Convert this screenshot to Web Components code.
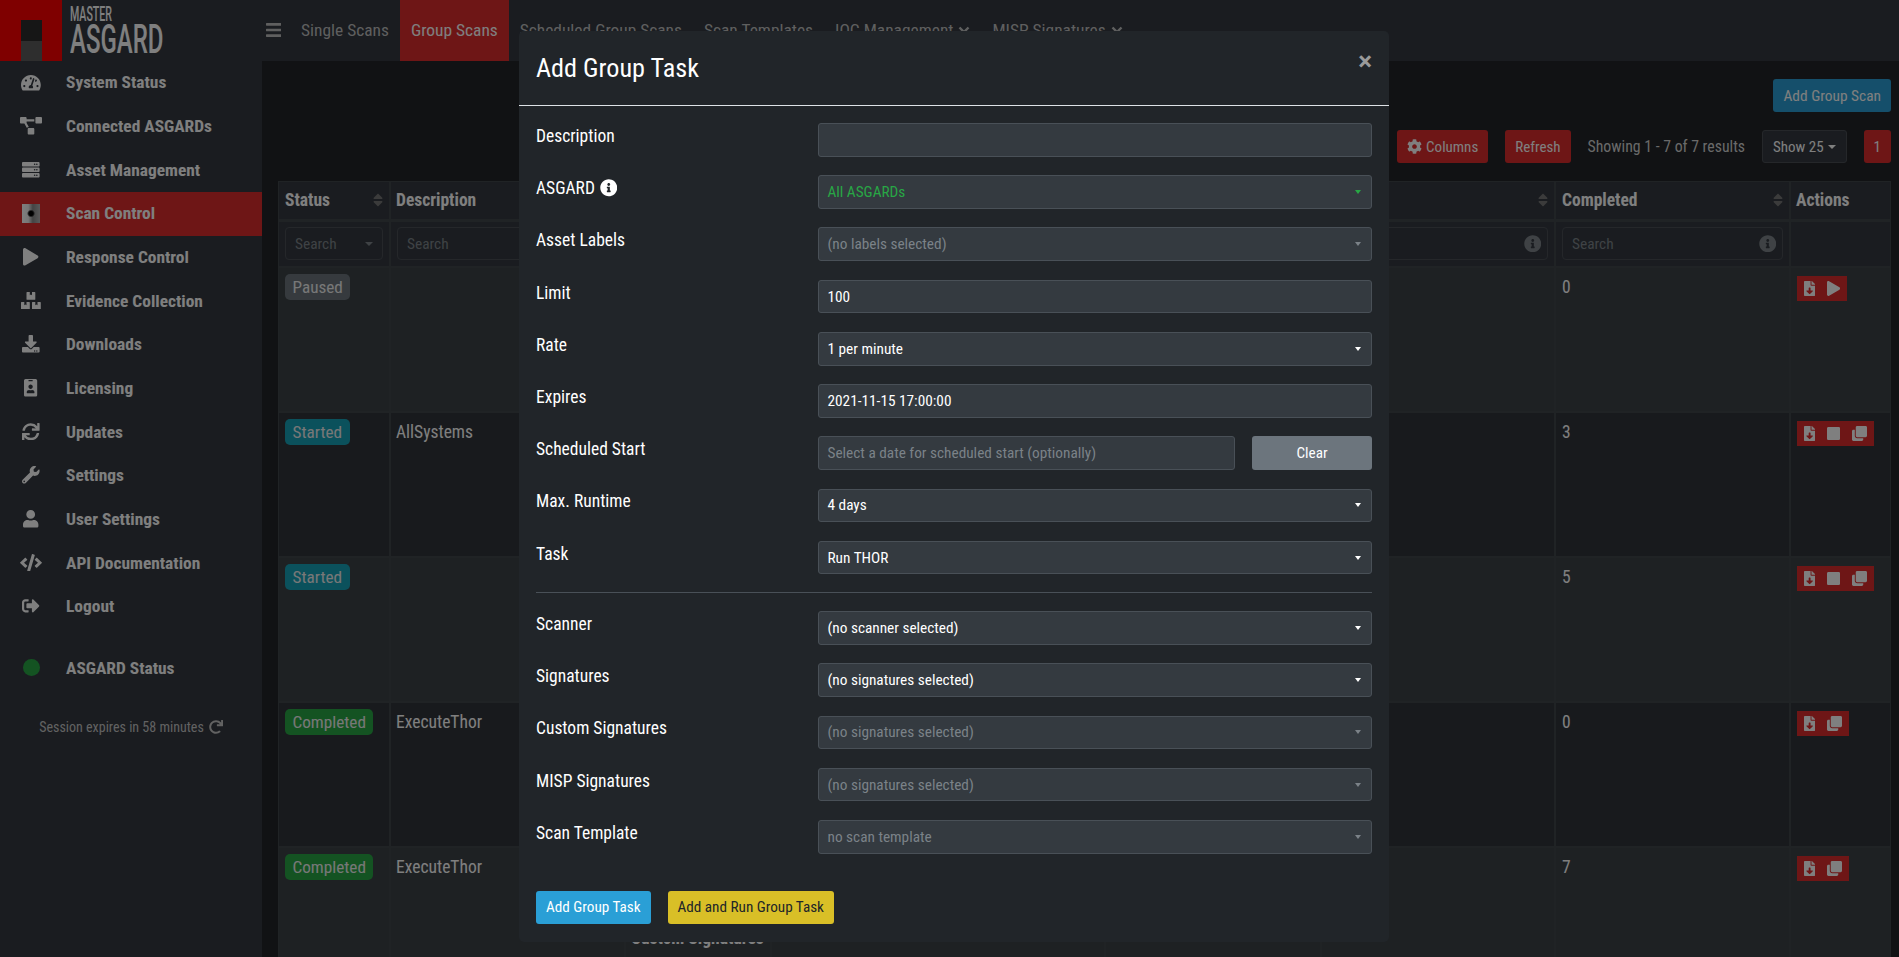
<!DOCTYPE html>
<html>
<head>
<meta charset="utf-8">
<title>ASGARD</title>
<style>
  html, body { margin: 0; height: 957px; overflow: hidden; }
  body {
    background: #222428;
    color: #fff;
    font-family: "Roboto Condensed", "Liberation Sans Narrow", Roboto, sans-serif;
    font-stretch: condensed;
    font-size: 17.5px;
  }
</style>
</head>
<body>
<asgard-page>
  <side-bar slot="side">
    <side-item icon="gauge">System Status</side-item>
    <side-item icon="diagram">Connected ASGARDs</side-item>
    <side-item icon="server">Asset Management</side-item>
    <side-item icon="scan" active>Scan Control</side-item>
    <side-item icon="play">Response Control</side-item>
    <side-item icon="boxes">Evidence Collection</side-item>
    <side-item icon="download">Downloads</side-item>
    <side-item icon="badge">Licensing</side-item>
    <side-item icon="sync">Updates</side-item>
    <side-item icon="wrench">Settings</side-item>
    <side-item icon="user">User Settings</side-item>
    <side-item icon="code">API Documentation</side-item>
    <side-item icon="logout">Logout</side-item>
  </side-bar>
  <top-nav slot="nav"></top-nav>
  <scan-view slot="main"></scan-view>
</asgard-page>

<modal-dialog heading="Add Group Task">
  <form-row label="Description"><form-control></form-control></form-row>
  <form-row label="ASGARD" info><form-control caret tone="green" value="All ASGARDs"></form-control></form-row>
  <form-row label="Asset Labels"><form-control caret tone="muted" value="(no labels selected)"></form-control></form-row>
  <form-row label="Limit"><form-control value="100"></form-control></form-row>
  <form-row label="Rate"><form-control caret value="1 per minute"></form-control></form-row>
  <form-row label="Expires"><form-control value="2021-11-15 17:00:00"></form-control></form-row>
  <form-row label="Scheduled Start">
    <form-control tone="muted" value="Select a date for scheduled start (optionally)"></form-control>
    <ui-button slot="extra" tone="gray">Clear</ui-button>
  </form-row>
  <form-row label="Max. Runtime"><form-control caret value="4 days"></form-control></form-row>
  <form-row label="Task"><form-control caret value="Run THOR"></form-control></form-row>
  <form-rule></form-rule>
  <form-row label="Scanner"><form-control caret value="(no scanner selected)"></form-control></form-row>
  <form-row label="Signatures"><form-control caret value="(no signatures selected)"></form-control></form-row>
  <form-row label="Custom Signatures"><form-control caret tone="muted" value="(no signatures selected)"></form-control></form-row>
  <form-row label="MISP Signatures"><form-control caret tone="muted" value="(no signatures selected)"></form-control></form-row>
  <form-row label="Scan Template"><form-control caret tone="muted" value="no scan template"></form-control></form-row>
  <ui-button slot="footer" tone="blue">Add Group Task</ui-button>
  <ui-button slot="footer" tone="yellow">Add and Run Group Task</ui-button>
</modal-dialog>

<script>
const ICONS = {
  gauge: [576, 'M288 32C128.94 32 0 160.94 0 320c0 52.8 14.25 102.26 39.06 144.8 5.61 9.62 16.3 15.2 27.44 15.2h443c11.14 0 21.83-5.58 27.44-15.2C561.75 422.26 576 372.8 576 320c0-159.06-128.94-288-288-288zm0 64c14.71 0 26.58 10.13 30.32 23.65-1.11 2.26-2.64 4.23-3.45 6.67l-9.22 27.67c-5.13 3.49-10.97 6.01-17.64 6.01-17.67 0-32-14.33-32-32S270.33 96 288 96zM96 384c-17.67 0-32-14.33-32-32s14.33-32 32-32 32 14.33 32 32-14.33 32-32 32zm48-160c-17.67 0-32-14.33-32-32s14.33-32 32-32 32 14.33 32 32-14.33 32-32 32zm246.77-72.41l-61.33 184C343.13 347.33 352 364.54 352 384c0 11.72-3.38 22.55-8.88 32H232.88c-5.5-9.45-8.88-20.28-8.88-32 0-33.94 26.5-61.43 59.9-63.59l61.34-184.01c4.17-12.56 17.73-19.45 30.36-15.17 12.57 4.19 19.35 17.79 15.17 30.36zm14.66 57.2l15.52-46.55c3.47-1.29 7.13-2.23 11.05-2.23 17.67 0 32 14.33 32 32s-14.33 32-32 32c-11.38-.01-20.89-6.28-26.57-15.22zM480 384c-17.67 0-32-14.33-32-32s14.33-32 32-32 32 14.33 32 32-14.33 32-32 32z'],
  diagram: [640, 'M384 320H256c-17.67 0-32 14.33-32 32v128c0 17.67 14.33 32 32 32h128c17.67 0 32-14.33 32-32V352c0-17.67-14.33-32-32-32zM192 32c0-17.67-14.33-32-32-32H32C14.33 0 0 14.33 0 32v128c0 17.67 14.33 32 32 32h95.72l73.16 128.04C211.98 300.98 232.4 288 256 288h.28L192 175.51V128h224V64H192V32zM608 0H480c-17.67 0-32 14.33-32 32v128c0 17.67 14.33 32 32 32h128c17.67 0 32-14.33 32-32V32c0-17.67-14.33-32-32-32z'],
  server: [512, 'M480 160H32c-17.673 0-32-14.327-32-32V64c0-17.673 14.327-32 32-32h448c17.673 0 32 14.327 32 32v64c0 17.673-14.327 32-32 32zm-48-88c-13.255 0-24 10.745-24 24s10.745 24 24 24 24-10.745 24-24-10.745-24-24-24zm-64 0c-13.255 0-24 10.745-24 24s10.745 24 24 24 24-10.745 24-24-10.745-24-24-24zm112 248H32c-17.673 0-32-14.327-32-32v-64c0-17.673 14.327-32 32-32h448c17.673 0 32 14.327 32 32v64c0 17.673-14.327 32-32 32zm-48-88c-13.255 0-24 10.745-24 24s10.745 24 24 24 24-10.745 24-24-10.745-24-24-24zm-64 0c-13.255 0-24 10.745-24 24s10.745 24 24 24 24-10.745 24-24-10.745-24-24-24zm112 248H32c-17.673 0-32-14.327-32-32v-64c0-17.673 14.327-32 32-32h448c17.673 0 32 14.327 32 32v64c0 17.673-14.327 32-32 32zm-48-88c-13.255 0-24 10.745-24 24s10.745 24 24 24 24-10.745 24-24-10.745-24-24-24zm-64 0c-13.255 0-24 10.745-24 24s10.745 24 24 24 24-10.745 24-24-10.745-24-24-24z'],
  play: [448, 'M424.4 214.7L72.4 6.6C43.8-10.3 0 6.1 0 47.9V464c0 37.5 40.7 60.1 72.4 41.3l352-208c31.4-18.5 31.5-64.1 0-82.6z'],
  boxes: [576, 'M560 288h-80v96l-32-21.3-32 21.3v-96h-80c-8.8 0-16 7.2-16 16v192c0 8.8 7.2 16 16 16h224c8.8 0 16-7.2 16-16V304c0-8.8-7.2-16-16-16zm-384-64h224c8.8 0 16-7.2 16-16V16c0-8.8-7.2-16-16-16h-80v96l-32-21.3L256 96V0h-80c-8.8 0-16 7.2-16 16v192c0 8.8 7.2 16 16 16zm64 64h-80v96l-32-21.3L96 384v-96H16c-8.8 0-16 7.2-16 16v192c0 8.8 7.2 16 16 16h224c8.8 0 16-7.2 16-16V304c0-8.8-7.2-16-16-16z'],
  download: [512, 'M216 0h80c13.3 0 24 10.7 24 24v168h87.7c17.8 0 26.7 21.5 14.1 34.1L269.7 378.3c-7.5 7.5-19.8 7.5-27.3 0L90.1 226.1c-12.6-12.6-3.7-34.1 14.1-34.1H192V24c0-13.3 10.7-24 24-24zm296 376v112c0 13.3-10.7 24-24 24H24c-13.3 0-24-10.7-24-24V376c0-13.3 10.7-24 24-24h146.7l49 49c20.1 20.1 52.5 20.1 72.6 0l49-49H488c13.3 0 24 10.7 24 24zm-124 88c0-11-9-20-20-20s-20 9-20 20 9 20 20 20 20-9 20-20zm64 0c0-11-9-20-20-20s-20 9-20 20 9 20 20 20 20-9 20-20z'],
  badge: [384, 'M336 0H48C21.5 0 0 21.5 0 48v416c0 26.5 21.5 48 48 48h288c26.5 0 48-21.5 48-48V48c0-26.5-21.5-48-48-48zM144 32h96c8.8 0 16 7.2 16 16s-7.2 16-16 16h-96c-8.8 0-16-7.2-16-16s7.2-16 16-16zm48 128c35.3 0 64 28.7 64 64s-28.7 64-64 64-64-28.7-64-64 28.7-64 64-64zm112 236.8c0 10.6-10 19.2-22.4 19.2H102.4C90 416 80 407.4 80 396.8v-19.2c0-31.8 30.1-57.6 67.2-57.6h5c12.3 5.1 25.7 8 39.8 8s27.6-2.9 39.8-8h5c37.1 0 67.2 25.8 67.2 57.6v19.2z'],
  sync: [512, 'M440.65 12.57l4 82.77A247.16 247.16 0 0 0 255.83 8C134.73 8 33.91 94.92 12.29 209.82A12 12 0 0 0 24.09 224h49.05a12 12 0 0 0 11.67-9.26 175.91 175.91 0 0 1 317-56.94l-101.46-4.86a12 12 0 0 0-12.57 12v47.41a12 12 0 0 0 12 12H500a12 12 0 0 0 12-12V12a12 12 0 0 0-12-12h-47.37a12 12 0 0 0-11.98 12.57zM255.83 432a175.61 175.61 0 0 1-146-77.8l101.8 4.87a12 12 0 0 0 12.57-12v-47.4a12 12 0 0 0-12-12H12a12 12 0 0 0-12 12V500a12 12 0 0 0 12 12h47.35a12 12 0 0 0 12-12.6l-4.15-82.57A247.17 247.17 0 0 0 255.83 504c121.11 0 221.93-86.92 243.55-201.82a12 12 0 0 0-11.8-14.18h-49.05a12 12 0 0 0-11.67 9.26A175.86 175.86 0 0 1 255.83 432z'],
  wrench: [512, 'M507.73 109.1c-2.24-9.03-13.54-12.09-20.12-5.51l-74.36 74.36-67.88-11.31-11.31-67.88 74.36-74.36c6.62-6.62 3.43-17.9-5.66-20.16-47.38-11.74-99.55.91-136.58 37.93-39.64 39.64-50.55 97.1-34.05 147.2L18.74 402.76c-24.99 24.99-24.99 65.51 0 90.5 24.99 24.99 65.51 24.99 90.5 0l213.21-213.21c50.12 16.71 107.47 5.68 147.37-34.22 37.07-37.07 49.7-89.32 37.91-136.73zM64 472c-13.25 0-24-10.75-24-24 0-13.26 10.75-24 24-24s24 10.74 24 24c0 13.25-10.75 24-24 24z'],
  user: [448, 'M224 256c70.7 0 128-57.3 128-128S294.7 0 224 0 96 57.3 96 128s57.3 128 128 128zm89.6 32h-16.7c-22.2 10.2-46.9 16-72.9 16s-50.6-5.8-72.9-16h-16.7C60.2 288 0 348.2 0 422.4V464c0 26.5 21.5 48 48 48h352c26.5 0 48-21.5 48-48v-41.6c0-74.2-60.2-134.4-134.4-134.4z'],
  code: [640, 'M278.9 511.5l-61-17.7c-6.4-1.8-10-8.5-8.2-14.9L346.2 8.7c1.8-6.4 8.5-10 14.9-8.2l61 17.7c6.4 1.8 10 8.5 8.2 14.9L293.8 503.3c-1.9 6.4-8.5 10.1-14.9 8.2zm-114-112.2l43.5-46.4c4.6-4.9 4.3-12.7-.8-17.2L117 256l90.6-79.7c5.1-4.5 5.5-12.3.8-17.2l-43.5-46.4c-4.5-4.8-12.1-5.1-17-.5L3.8 247.2c-5.1 4.7-5.1 12.8 0 17.5l144.1 135.1c4.9 4.6 12.5 4.4 17-.5zm327.2.6l144.1-135.1c5.1-4.7 5.1-12.8 0-17.5L492.1 112.1c-4.8-4.5-12.4-4.3-17 .5L431.6 159c-4.6 4.9-4.3 12.7.8 17.2L523 256l-90.6 79.7c-5.1 4.5-5.5 12.3-.8 17.2l43.5 46.4c4.5 4.9 12.1 5.1 17 .6z'],
  logout: [512, 'M497 273L329 441c-15 15-41 4.5-41-17v-96H152c-13.3 0-24-10.7-24-24v-96c0-13.3 10.7-24 24-24h136V88c0-21.4 25.9-32 41-17l168 168c9.3 9.4 9.3 24.6 0 34zM192 436v-40c0-6.6-5.4-12-12-12H96c-17.7 0-32-14.3-32-32V160c0-17.7 14.3-32 32-32h84c6.6 0 12-5.4 12-12V76c0-6.6-5.4-12-12-12H96c-53 0-96 43-96 96v192c0 53 43 96 96 96h84c6.6 0 12-5.4 12-12z'],
  redo: [512, 'M500.33 0h-47.41a12 12 0 0 0-12 12.57l4 82.76A247.42 247.42 0 0 0 256 8C119.34 8 7.9 119.53 8 256.19 8.1 393.07 119.1 504 256 504a247.1 247.1 0 0 0 166.18-63.91 12 12 0 0 0 .48-17.43l-34-34a12 12 0 0 0-16.38-.55A176 176 0 1 1 402.1 157.8l-101.53-4.87a12 12 0 0 0-12.57 12v47.41a12 12 0 0 0 12 12h200.33a12 12 0 0 0 12-12V12a12 12 0 0 0-12-12z'],
  bars: [448, 'M16 132h416c8.837 0 16-7.163 16-16V76c0-8.837-7.163-16-16-16H16C7.163 60 0 67.163 0 76v40c0 8.837 7.163 16 16 16zm0 160h416c8.837 0 16-7.163 16-16v-40c0-8.837-7.163-16-16-16H16c-8.837 0-16 7.163-16 16v40c0 8.837 7.163 16 16 16zm0 160h416c8.837 0 16-7.163 16-16v-40c0-8.837-7.163-16-16-16H16c-8.837 0-16 7.163-16 16v40c0 8.837 7.163 16 16 16z'],
  cog: [512, 'M487.4 315.7l-42.6-24.6c4.3-23.2 4.3-47 0-70.2l42.6-24.6c4.9-2.8 7.1-8.6 5.5-14-11.1-35.6-30-67.8-54.7-94.6-3.8-4.1-10-5.1-14.8-2.3L380.8 110c-17.9-15.4-38.5-27.3-60.8-35.1V25.8c0-5.6-3.9-10.5-9.4-11.7-36.7-8.2-74.3-7.8-109.2 0-5.5 1.2-9.4 6.1-9.4 11.7V75c-22.2 7.9-42.8 19.8-60.8 35.1L88.7 85.5c-4.9-2.8-11-1.9-14.8 2.3-24.7 26.7-43.6 58.9-54.7 94.6-1.7 5.4.6 11.2 5.5 14L67.3 221c-4.3 23.2-4.3 47 0 70.2l-42.6 24.6c-4.9 2.8-7.1 8.6-5.5 14 11.1 35.6 30 67.8 54.7 94.6 3.8 4.1 10 5.1 14.8 2.3l42.6-24.6c17.9 15.4 38.5 27.3 60.8 35.1v49.2c0 5.6 3.9 10.5 9.4 11.7 36.7 8.2 74.3 7.8 109.2 0 5.5-1.2 9.4-6.1 9.4-11.7v-49.2c22.2-7.9 42.8-19.8 60.8-35.1l42.6 24.6c4.9 2.8 11 1.9 14.8-2.3 24.7-26.7 43.6-58.9 54.7-94.6 1.5-5.5-.7-11.3-5.6-14.1zM256 336c-44.1 0-80-35.9-80-80s35.9-80 80-80 80 35.9 80 80-35.9 80-80 80z'],
  info: [512, 'M256 8C119.043 8 8 119.083 8 256c0 136.997 111.043 248 248 248s248-111.003 248-248C504 119.083 392.957 8 256 8zm0 110c23.196 0 42 18.804 42 42s-18.804 42-42 42-42-18.804-42-42 18.804-42 42-42zm56 254c0 6.627-5.373 12-12 12h-88c-6.627 0-12-5.373-12-12v-24c0-6.627 5.373-12 12-12h12v-64h-12c-6.627 0-12-5.373-12-12v-24c0-6.627 5.373-12 12-12h64c6.627 0 12 5.373 12 12v100h12c6.627 0 12 5.373 12 12v24z'],
  file: [384, 'M224 136V0H24C10.7 0 0 10.7 0 24v464c0 13.3 10.7 24 24 24h336c13.3 0 24-10.7 24-24V160H248c-13.2 0-24-10.8-24-24zm76.45 211.36l-96.42 95.7c-6.65 6.61-17.39 6.61-24.04 0l-96.42-95.7C73.42 337.29 80.54 320 94.82 320H160v-80c0-8.84 7.16-16 16-16h32c8.84 0 16 7.16 16 16v80h65.18c14.28 0 21.4 17.29 11.27 27.36zM377 105L279.1 7c-4.5-4.5-10.6-7-17-7H256v128h128v-6.1c0-6.3-2.5-12.4-7-16.9z'],
  stop: [448, 'M400 32H48C21.5 32 0 53.5 0 80v352c0 26.5 21.5 48 48 48h352c26.5 0 48-21.5 48-48V80c0-26.5-21.5-48-48-48z'],
  clone: [512, 'M464 0c26.51 0 48 21.49 48 48v288c0 26.51-21.49 48-48 48H176c-26.51 0-48-21.49-48-48V48c0-26.51 21.49-48 48-48h288M176 416c-44.112 0-80-35.888-80-80V128H48c-26.51 0-48 21.49-48 48v288c0 26.51 21.49 48 48 48h288c26.51 0 48-21.49 48-48v-48H176z'],
  sort: [320, 'M41 288h238c21.4 0 32.1 25.9 17 41L177 448c-9.4 9.4-24.6 9.4-33.9 0L24 329c-15.1-15.1-4.4-41 17-41zm255-105L177 64c-9.4-9.4-24.6-9.4-33.9 0L24 183c-15.1 15.1-4.4 41 17 41h238c21.4 0 32.1-25.9 17-41z']
};

class UiIcon extends HTMLElement {
  connectedCallback() {
    const size = parseFloat(this.getAttribute('size') || 17.6);
    const name = this.getAttribute('name');
    const root = this.attachShadow({mode: 'open'});
    const style = '<style>:host{display:inline-flex;line-height:0}svg{display:block;fill:currentColor}</style>';
    if (name === 'scan') {
      root.innerHTML = style + `<svg width="18" height="19" viewBox="0 0 18 19">
        <defs>
          <linearGradient id="g"><stop offset="0" stop-color="#fff"/><stop offset=".35" stop-color="#eee"/><stop offset=".6" stop-color="#888"/><stop offset="1" stop-color="#b4b4b4"/></linearGradient>
          <radialGradient id="h"><stop offset=".55" stop-color="#000"/><stop offset="1" stop-color="#000" stop-opacity="0"/></radialGradient>
        </defs>
        <rect width="18" height="19" fill="url(#g)"/><rect x="5" y="5.5" width="8" height="8" fill="url(#h)"/></svg>`;
      return;
    }
    const [w, d] = ICONS[name];
    root.innerHTML = style + `<svg width="${size * w / 512}" height="${size}" viewBox="0 0 ${w} 512"><path d="${d}"/></svg>`;
  }
}
customElements.define('ui-icon', UiIcon);

class AsgardPage extends HTMLElement {
  constructor() {
    super();
    this.attachShadow({mode: 'open'}).innerHTML = `
      <style>
        :host { display: grid; grid-template-columns: 262px 1fr; grid-template-rows: 61px 896px; width: 1899px; height: 957px; overflow: hidden; }
        .logo { background: #343941; display: flex; }
        .mark { width: 62px; height: 61px; background: #f00; flex: none; display: flex; flex-direction: column; align-items: center; padding-top: 20px; box-sizing: border-box; }
        .mark i { display: block; width: 21px; height: 20.5px; background: #2c2c2c; }
        .mark i + i { background: #5c5c5c; }
        .word { margin-left: 8px; padding-top: 7px; color: #fff; font-family: Roboto, sans-serif; font-stretch: normal; }
        .word b { display: block; font-weight: 500; white-space: nowrap; transform-origin: 0 0; }
        .small { font-size: 20px; line-height: 14px; transform: scaleX(.53); }
        .big { font-size: 41px; line-height: 30px; margin-top: 3px; transform: scaleX(.585); }
        .side { background: #343941; }
      </style>
      <div class="logo">
        <div class="mark"><i></i><i></i></div>
        <div class="word"><b class="small">MASTER</b><b class="big">ASGARD</b></div>
      </div>
      <slot name="nav"></slot>
      <div class="side"><slot name="side"></slot></div>
      <slot name="main"></slot>`;
  }
}
customElements.define('asgard-page', AsgardPage);

class SideBar extends HTMLElement {
  constructor() {
    super();
    this.attachShadow({mode: 'open'}).innerHTML = `
      <style>
        :host { display: block; }
        .status { display: flex; align-items: center; height: 44px; margin-top: 17px; font-size: 17.4px; font-weight: 700; color: #fff; }
        .dot { width: 17px; height: 17px; border-radius: 50%; background: #28a745; margin: 0 26px 0 23px; flex: none; }
        .session { display: flex; align-items: center; justify-content: center; gap: 5px; margin-top: 22px; height: 30px; font-size: 14px; color: #c4c4c4; }
      </style>
      <slot></slot>
      <div class="status"><span class="dot"></span>ASGARD Status</div>
      <div class="session">Session expires in 58 minutes <ui-icon name="redo" size="14"></ui-icon></div>`;
  }
}
customElements.define('side-bar', SideBar);

class SideItem extends HTMLElement {
  connectedCallback() {
    this.attachShadow({mode: 'open'}).innerHTML = `
      <style>
        :host { display: flex; align-items: center; height: 43.67px; box-sizing: border-box; padding-bottom: 1px; font-size: 17.4px; font-weight: 700; color: #fff; }
        :host([active]) { background: #dc2c2c; }
        .ico { width: 62px; display: flex; justify-content: center; margin-right: 4px; }
      </style>
      <span class="ico"><ui-icon name="${this.getAttribute('icon')}"></ui-icon></span><slot></slot>`;
  }
}
customElements.define('side-item', SideItem);

class TopNav extends HTMLElement {
  constructor() {
    super();
    const link = (text, on, drop) => `<a class="${on ? 'on' : ''}">${text}${drop ? '<svg width="12" height="8" viewBox="0 0 12 8"><path d="M1.5 1.5 6 6l4.5-4.5" fill="none" stroke="currentColor" stroke-width="2.4"/></svg>' : ''}</a>`;
    this.attachShadow({mode: 'open'}).innerHTML = `
      <style>
        :host { display: flex; align-items: stretch; height: 61px; box-sizing: border-box; background: #343941; color: #bfbfbf; font-size: 17.4px; }
        .bars { width: 23px; margin-right: 5px; padding-bottom: 2px; display: flex; align-items: center; justify-content: center; }
        a { display: flex; align-items: center; gap: 5px; padding: 0 11px 2px; white-space: nowrap; }
        a.on { background: #dc2c2c; color: #fff; }
      </style>
      <span class="bars"><ui-icon name="bars" size="18"></ui-icon></span>
      ${link('Single Scans')}${link('Group Scans', true)}${link('Scheduled Group Scans')}${link('Scan Templates')}${link('IOC Management', false, true)}${link('MISP Signatures', false, true)}`;
  }
}
customElements.define('top-nav', TopNav);

class UiButton extends HTMLElement {
  constructor() {
    super();
    this.attachShadow({mode: 'open'}).innerHTML = `
      <style>
        :host { display: inline-flex; align-items: center; justify-content: center; gap: 4px; height: 33px; padding: 0 10px; box-sizing: border-box; border-radius: 3px; font-size: var(--btn-size, 15.2px); white-space: nowrap; color: #fff; background: #dc2c2c; }
        :host([tone=gray]) { background: #6c757d; width: 120px; }
        :host([tone=blue]) { background: #2a9fd6; }
        :host([tone=yellow]) { background: #d9bf27; color: #212529; }
        :host([tone=outline]) { background: #343941; border: 1px solid #4a4f55; }
      </style><slot></slot>`;
  }
}
customElements.define('ui-button', UiButton);

class StatusBadge extends HTMLElement {
  constructor() {
    super();
    this.attachShadow({mode: 'open'}).innerHTML = `
      <style>
        :host { display: inline-block; vertical-align: top; height: 26px; line-height: 26px; padding: 0 7.5px; border-radius: 5px; font-size: 17.2px; background: #6c757d; color: #f0f0f0; }
        :host([tone=started]) { background: #17a2b8; }
        :host([tone=completed]) { background: #28a745; }
      </style><slot></slot>`;
  }
}
customElements.define('status-badge', StatusBadge);

class RowActions extends HTMLElement {
  connectedCallback() {
    const icons = this.getAttribute('icons').split(' ');
    this.attachShadow({mode: 'open'}).innerHTML = `
      <style>
        :host { display: inline-flex; vertical-align: top; align-items: center; gap: 12px; height: 25px; margin-top: 2px; padding: 0 7px; background: #dc2c2c; color: #fff; }
      </style>
      ${icons.map(n => `<ui-icon name="${n}" size="15"></ui-icon>`).join('')}`;
  }
}
customElements.define('row-actions', RowActions);

class SearchBox extends HTMLElement {
  connectedCallback() {
    const kind = this.getAttribute('kind');
    this.attachShadow({mode: 'open'}).innerHTML = `
      <style>
        :host { display: flex; align-items: center; justify-content: space-between; height: 33px; box-sizing: border-box; border: 1px solid #4a4f55; border-radius: 4px; padding: 0 6px 0 9px; font-size: 15.4px; color: #7e858a; }
        i { width: 0; height: 0; border: 4px solid transparent; border-top-color: #7e858a; border-bottom: 0; margin-right: 3px; }
      </style>
      <span>Search</span>${kind === 'select' ? '<i></i>' : ''}${kind === 'info' ? '<ui-icon name="info" size="17.5"></ui-icon>' : ''}`;
  }
}
customElements.define('search-box', SearchBox);

class ScanTable extends HTMLElement {
  constructor() {
    super();
    const widths = [112, 235, 146, 334, 216, 234, 235, 101];
    const head = ['Status', 'Description', '', '', '', '', 'Completed', 'Actions'];
    const sortable = [1, 0, 0, 0, 0, 1, 1, 0];
    const rows = [
      ['Paused', 'paused', '', '0', 'file play', ''],
      ['Started', 'started', 'AllSystems', '3', 'file stop clone', ''],
      ['Started', 'started', '', '5', 'file stop clone', ''],
      ['Completed', 'completed', 'ExecuteThor', '0', 'file clone', ''],
      ['Completed', 'completed', 'ExecuteThor', '7', 'file clone', 'Custom Signatures']
    ];
    const filters = ['select', 'plain', 'plain', 'plain', 'plain', 'info', 'info', ''];
    this.attachShadow({mode: 'open'}).innerHTML = `
      <style>
        :host { display: block; }
        table { table-layout: fixed; width: 1613px; border-collapse: separate; border-spacing: 0; }
        th, td { box-sizing: border-box; border: 1px solid #41464b; padding: 6px 6px 6px 5px; vertical-align: top; text-align: left; line-height: 26px; font-weight: 400; overflow: hidden; white-space: nowrap; }
        thead tr:first-child th { height: 40px; font-weight: 700; border-bottom-width: 2px; padding-top: 5px; padding-bottom: 0; background: #343941; }
        thead tr:first-child th:nth-child(1), thead tr:first-child th:nth-child(7) { padding-left: 6px; }
        .hd { display: flex; align-items: center; justify-content: space-between; height: 26px; }
        .hd ui-icon { color: #777; }
        .flt th { height: 46px; padding: 5px 6px; background: #343941; }
        td { height: 145px; }
        td:nth-child(1), td:nth-child(7), td:nth-child(8) { padding-left: 6px; }
        tbody tr:nth-child(odd) td { background: #3c4247; }
        tbody tr:nth-child(even) td { background: #30353a; }
        .tag { display: block; margin-top: 71px; font-weight: 700; }
      </style>
      <table>
        <colgroup>${widths.map(w => `<col style="width:${w}px">`).join('')}</colgroup>
        <thead>
          <tr>${head.map((h, i) => `<th><div class="hd"><span>${h}</span>${sortable[i] ? '<ui-icon name="sort" size="16"></ui-icon>' : ''}</div></th>`).join('')}</tr>
          <tr class="flt">${filters.map(f => `<th>${f ? `<search-box kind="${f}"></search-box>` : ''}</th>`).join('')}</tr>
        </thead>
        <tbody>
          ${rows.map(r => `<tr>
            <td><status-badge tone="${r[1]}">${r[0]}</status-badge></td>
            <td>${r[2]}</td>
            <td>${r[5] ? `<span class="tag">${r[5]}</span>` : ''}</td><td></td><td></td><td></td>
            <td>${r[3]}</td>
            <td><row-actions icons="${r[4]}"></row-actions></td>
          </tr>`).join('')}
        </tbody>
      </table>`;
  }
}
customElements.define('scan-table', ScanTable);

class ScanView extends HTMLElement {
  constructor() {
    super();
    this.attachShadow({mode: 'open'}).innerHTML = `
      <style>
        :host { display: block; padding: 18px 8px 0 16px; background: #222428; overflow: hidden; --btn-size: 15px; }
        .add { display: flex; justify-content: flex-end; height: 33px; --btn-size: 15.4px; }
        .tools { display: flex; justify-content: flex-end; align-items: center; gap: 17px; height: 33px; margin: 18px 0; font-size: 15.8px; }
        .count { color: #d4d4d4; }
        i { width: 0; height: 0; border: 4px solid transparent; border-top-color: currentColor; border-bottom: 0; }
      </style>
      <div class="add"><ui-button tone="blue">Add Group Scan</ui-button></div>
      <div class="tools">
        <ui-button><ui-icon name="cog" size="15"></ui-icon>Columns</ui-button>
        <ui-button>Refresh</ui-button>
        <span class="count">Showing 1 - 7 of 7 results</span>
        <ui-button tone="outline">Show 25 <i></i></ui-button>
        <ui-button>1</ui-button>
      </div>
      <scan-table></scan-table>`;
  }
}
customElements.define('scan-view', ScanView);

class ModalDialog extends HTMLElement {
  connectedCallback() {
    this.attachShadow({mode: 'open'}).innerHTML = `
      <style>
        :host { position: fixed; inset: 0; background: rgba(0,0,0,.5); }
        .box { width: 870px; margin: 31px 0 0 519px; background: #212529; border-radius: 5px; box-sizing: border-box; }
        header { display: flex; justify-content: space-between; height: 74px; padding: 0 17px; align-items: center; border-bottom: 1px solid #dee2e6; }
        h2 { margin: 0; font-size: 26.2px; font-weight: 400; color: #fff; }
        .x { align-self: flex-start; margin-top: 15px; font-family: Roboto, sans-serif; font-stretch: normal; font-size: 26px; line-height: 30px; font-weight: 700; color: #9a9a9a; }
        .body { padding: 17px 17px 18px; }
        footer { display: flex; gap: 17px; margin-top: 37px; }
      </style>
      <div class="box">
        <header><h2>${this.getAttribute('heading')}</h2><span class="x">×</span></header>
        <div class="body">
          <slot></slot>
          <footer><slot name="footer"></slot></footer>
        </div>
      </div>`;
  }
}
customElements.define('modal-dialog', ModalDialog);

class FormRow extends HTMLElement {
  connectedCallback() {
    const info = this.hasAttribute('info') ? '<ui-icon name="info" size="17.5"></ui-icon>' : '';
    this.attachShadow({mode: 'open'}).innerHTML = `
      <style>
        :host { display: grid; grid-template-columns: 282px 1fr auto; height: 33.6px; margin-bottom: 18.65px; }
        label { display: flex; align-items: center; gap: 5px; height: 25.6px; color: #fff; }
        ::slotted([slot=extra]) { margin-left: 17px; height: 34px; }
      </style>
      <label>${this.getAttribute('label')}${info}</label>
      <slot></slot><slot name="extra"></slot>`;
  }
}
customElements.define('form-row', FormRow);

class FormRule extends HTMLElement {
  constructor() {
    super();
    this.attachShadow({mode: 'open'}).innerHTML = `
      <style>:host { display: block; height: 1px; margin: -1px 0 18px; background: #495057; }</style>`;
  }
}
customElements.define('form-rule', FormRule);

class FormControl extends HTMLElement {
  connectedCallback() {
    this.attachShadow({mode: 'open'}).innerHTML = `
      <style>
        :host { display: flex; align-items: center; justify-content: space-between; height: 33.6px; box-sizing: border-box; padding: 0 10px 0 8.5px; background: #343a40; border: 1px solid #495057; border-radius: 3px; font-size: 15.3px; color: #fff; }
        :host([tone=green]) { color: #28a745; }
        :host([tone=muted]) { color: #7b8288; }
        i { width: 0; height: 0; border: 3.5px solid transparent; border-top: 4px solid currentColor; border-bottom: 0; }
      </style>
      <span>${this.getAttribute('value') || ''}</span>${this.hasAttribute('caret') ? '<i></i>' : ''}`;
  }
}
customElements.define('form-control', FormControl);
</script>
</body>
</html>
